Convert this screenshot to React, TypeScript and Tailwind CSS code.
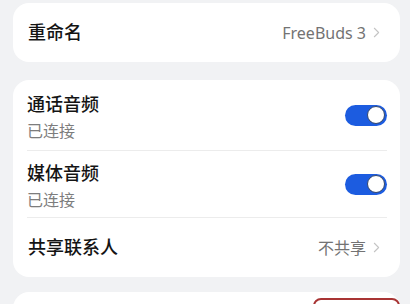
import { ChevronRight } from "lucide-react";

const font = { fontFamily: '"Noto Sans", "Noto Sans CJK SC", sans-serif' };

function Toggle() {
  return (
    <div className="flex h-[21px] w-[42px] items-center justify-end rounded-full bg-[#1c5ce0] px-[2px]">
      <div className="h-[18px] w-[18px] rounded-full border border-[#34476b] bg-white" />
    </div>
  );
}

function ToggleRow({ title, h }: { title: string; h: string }) {
  return (
    <div className={`flex items-center justify-between ${h}`}>
      <div className="flex flex-col gap-[3px] pt-[4px]">
        <span className="text-[18px] font-medium leading-[25px] text-[#141414]">{title}</span>
        <span className="text-[16px] leading-[22px] text-[#7d7d7d]">已连接</span>
      </div>
      <Toggle />
    </div>
  );
}

export default function App() {
  return (
    <div
      className="flex h-[304px] w-[410px] flex-col overflow-hidden bg-[#f1f2f4] pl-[13px] pr-[10px] pt-[3px]"
      style={font}
    >
      <div className="flex h-[59px] shrink-0 items-center justify-between rounded-[16px] bg-white pl-[15px] pr-[15px]">
        <span className="text-[18px] font-medium text-[#141414]">重命名</span>
        <div className="flex items-center gap-[2px]">
          <span className="text-[16px] text-[#737373]">FreeBuds 3</span>
          <ChevronRight size={17} strokeWidth={1.5} className="text-[#c4c4c4]" />
        </div>
      </div>

      <div className="mt-[18px] flex shrink-0 flex-col rounded-[16px] bg-white pl-[14px] pr-[13px]">
        <ToggleRow title="通话音频" h="h-[70px]" />
        <div className="h-px bg-[#ececec]" />
        <ToggleRow title="媒体音频" h="h-[66px]" />
        <div className="h-px bg-[#ececec]" />
        <div className="flex h-[59px] items-center justify-between pl-px pr-[2px]">
          <span className="text-[18px] font-medium text-[#141414]">共享联系人</span>
          <div className="flex items-center gap-[2px]">
            <span className="text-[16px] text-[#737373]">不共享</span>
            <ChevronRight size={17} strokeWidth={1.5} className="text-[#c4c4c4]" />
          </div>
        </div>
      </div>

      <div className="mt-[15px] flex h-[40px] shrink-0 justify-end rounded-t-[16px] bg-white pt-[6px]">
        <div className="h-[40px] w-[87px] rounded-[8px] border-2 border-[#a83434] bg-white" />
      </div>
    </div>
  );
}
